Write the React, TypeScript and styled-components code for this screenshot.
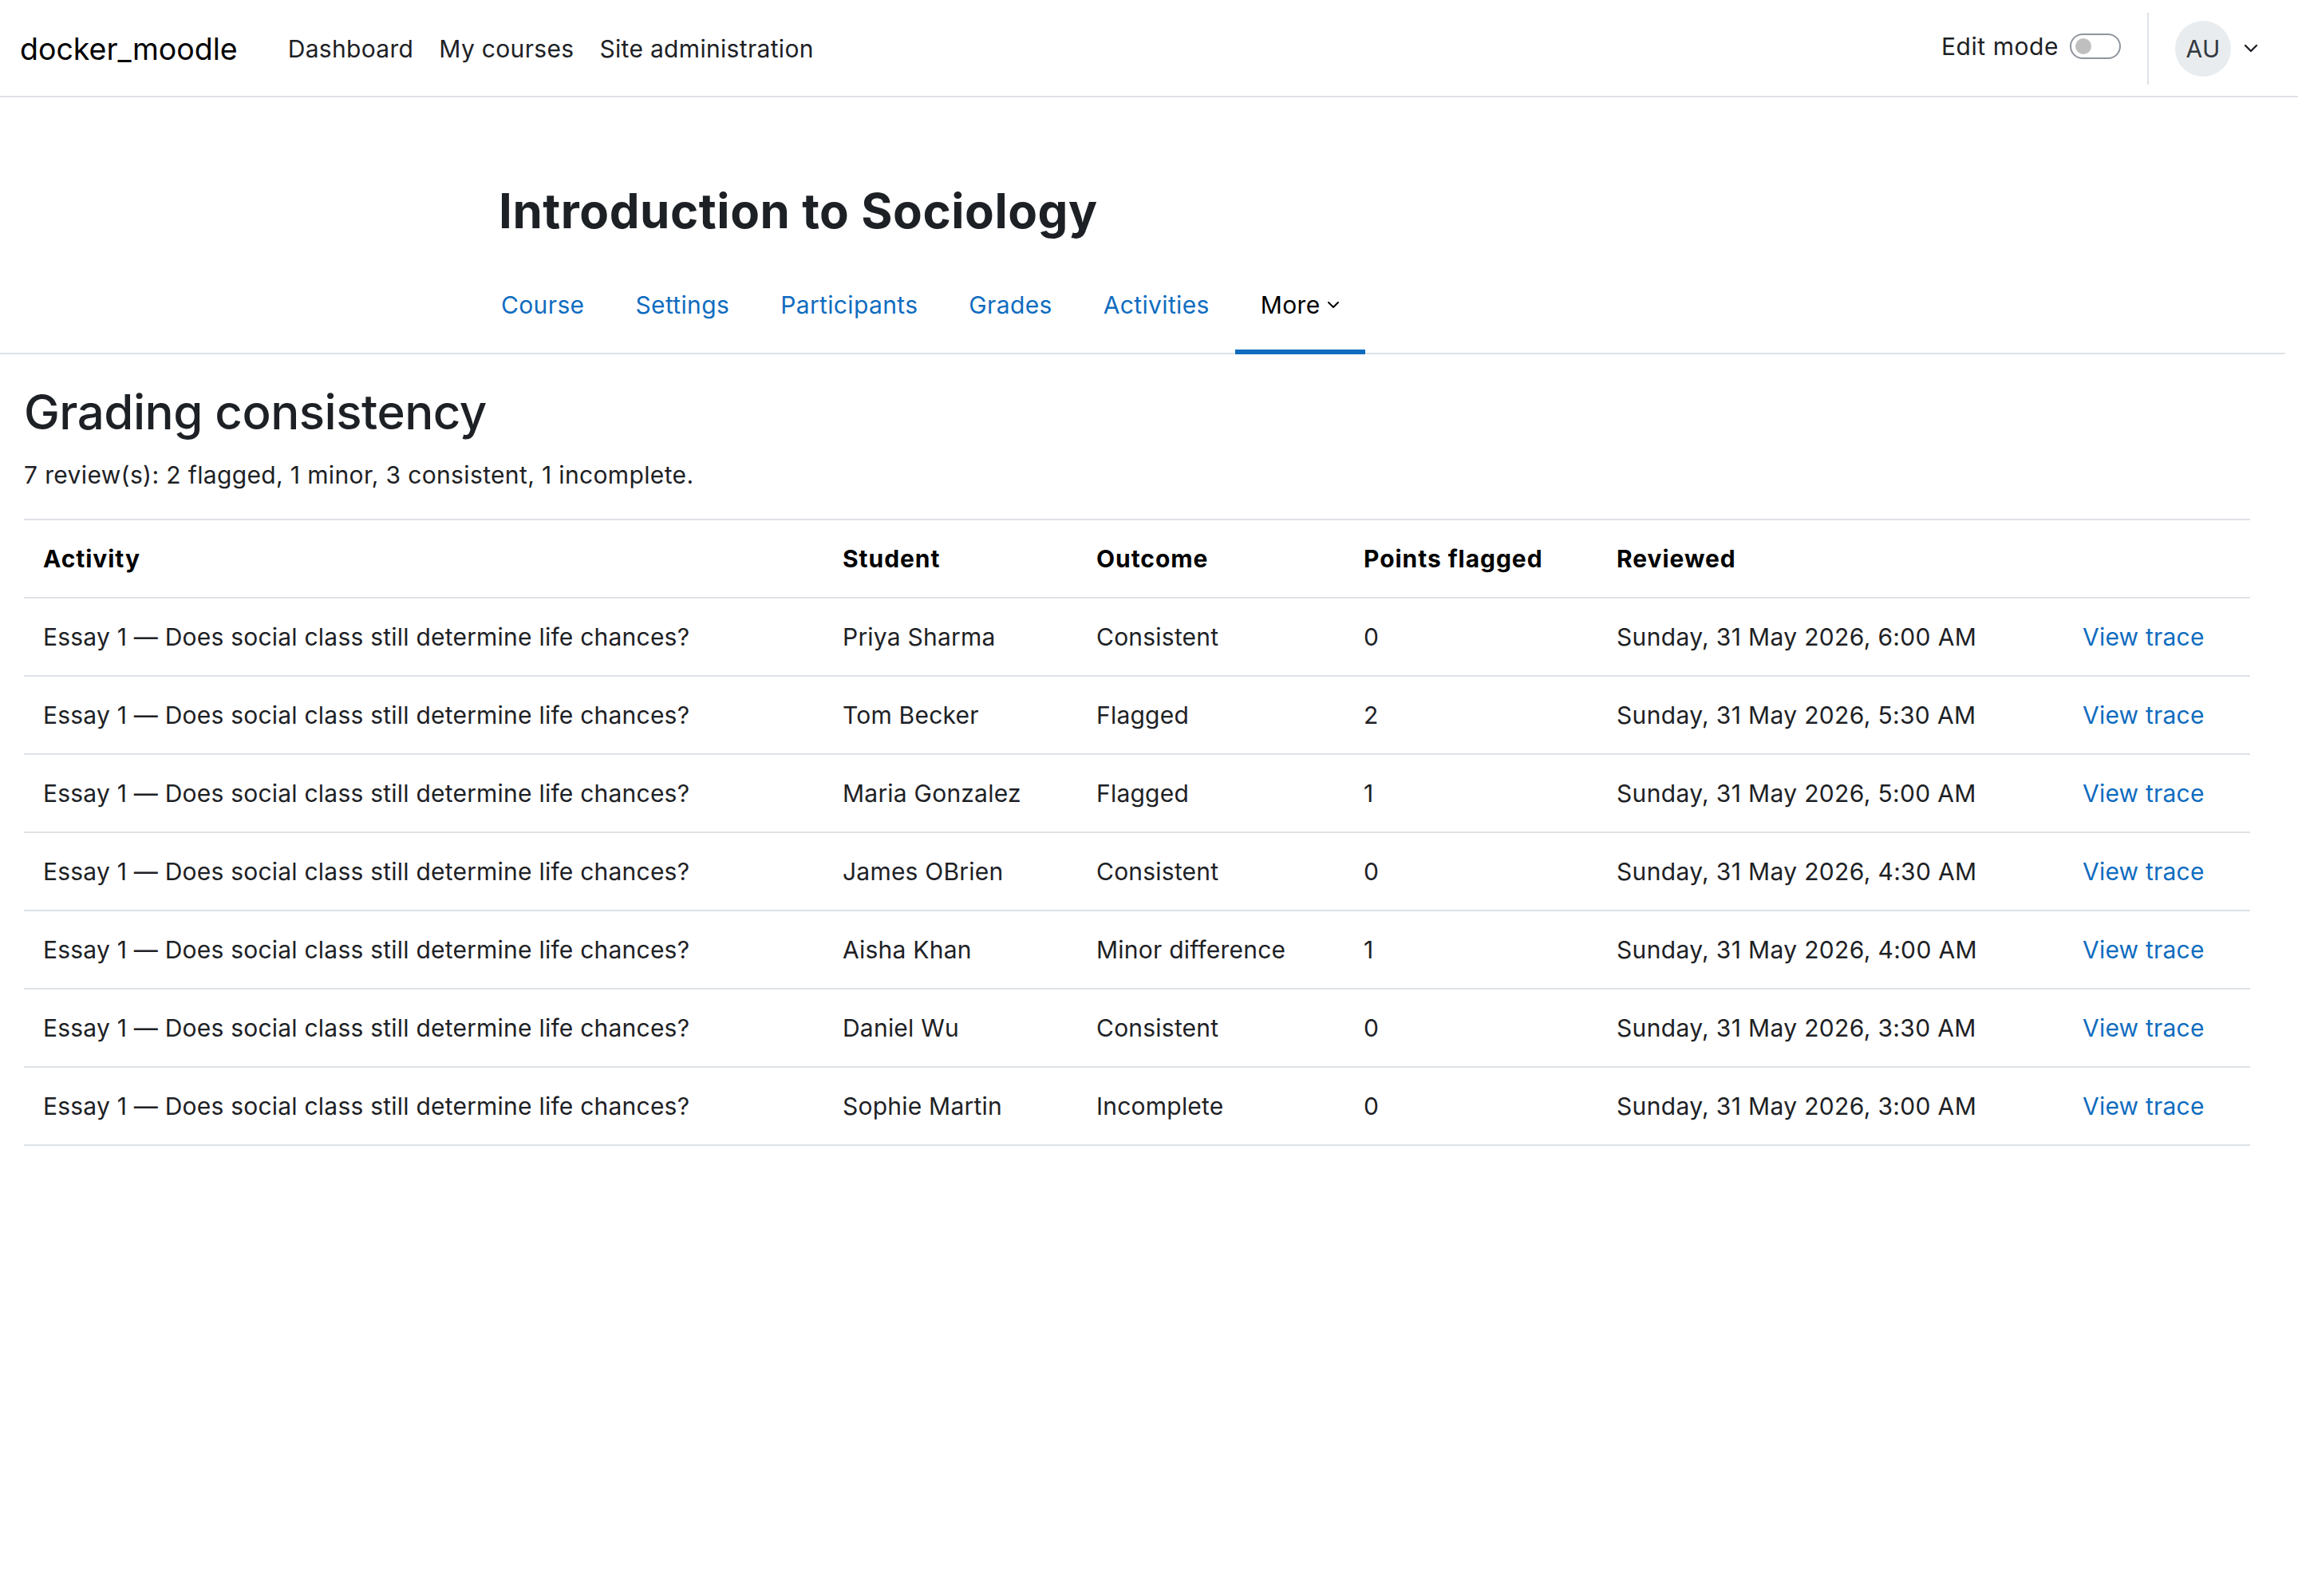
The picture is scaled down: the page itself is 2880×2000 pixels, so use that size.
import React from "react";
import styled, { createGlobalStyle } from "styled-components";

const Global = createGlobalStyle`
  html, body { margin: 0; padding: 0; background: #fff; }
  body { font-family: Inter, "Liberation Sans", sans-serif; color: #1d2125; font-size: 30px; line-height: 45px; letter-spacing: 0.22px; }
  a { text-decoration: none; color: inherit; }
`;

const Navbar = styled.header`
  display: flex; align-items: center; box-sizing: border-box; height: 122px; border-bottom: 2px solid #dee2e6; padding: 2px 50px 0 25px;
`;
const Brand = styled.a`
  font-size: 37.5px; letter-spacing: 0; color: #000; margin-right: 63px;
`;
const PrimaryNav = styled.nav`
  display: flex; gap: 32px; flex: 1;
`;
const NavItem = styled.a`
  color: #1d2125; letter-spacing: 0.32px;
`;
const UserArea = styled.div`
  display: flex; align-items: center;
`;
const EditMode = styled.div`
  display: flex; align-items: center; gap: 14px; padding-bottom: 6px; letter-spacing: 0.55px;
`;
const Toggle = styled.span`
  display: flex; align-items: center; box-sizing: border-box; width: 64px; height: 32px; border: 2px solid #8f959e; border-radius: 16px; padding-left: 5px;
`;
const Knob = styled.span`
  display: block; width: 20px; height: 20px; border-radius: 50%; background: #bfbfbf;
`;
const Divider = styled.span`
  display: block; width: 2px; height: 90px; background: #dee2e6; margin: 0 33px;
`;
const Avatar = styled.span`
  display: flex; align-items: center; justify-content: center; width: 70px; height: 70px; border-radius: 50%; background: #e9ecef; color: #343a40; margin-right: 16px;
`;
const Chevron = styled.svg`
  display: block; fill: none; stroke: currentColor; stroke-linecap: round; stroke-linejoin: round;
`;
const CourseHeader = styled.div`
  padding: 106px 16px 0 0;
`;
const CourseTitle = styled.h1`
  margin: 0 0 43px 625px; font-size: 60px; line-height: 72px; font-weight: 700; letter-spacing: 0.55px; color: #1d2125;
`;
const Tabs = styled.nav`
  display: flex; padding-left: 596px; border-bottom: 2px solid #dee2e6; height: 99px;
`;
const Tab = styled.a<{ $active?: boolean }>`
  display: flex; align-items: center; gap: 8px; box-sizing: border-box; height: 101px; padding: 0 32px 17px; letter-spacing: 0.36px; color: ${p => (p.$active ? "#000" : "#0f6cbf")};
  border-bottom: 6px solid ${p => (p.$active ? "#0f6cbf" : "transparent")};
`;
const Main = styled.main`
  padding: 36px 60px 0 30px;
`;
const PageTitle = styled.h2`
  margin: 0; font-size: 60px; line-height: 72px; font-weight: 500; letter-spacing: -0.5px; color: #1d2125;
`;
const Summary = styled.p`
  margin: 21px 0 32px; letter-spacing: 0.36px;
`;
const Table = styled.table`
  width: 100%; border-collapse: collapse; border-top: 2px solid #dee2e6;
`;
const Row = styled.tr`
  border-bottom: 2px solid #dee2e6;
`;
const Th = styled.th<{ $w?: number }>`
  width: ${p => (p.$w ? `${p.$w}px` : "auto")}; height: 96px; box-sizing: content-box; padding: 0 24px; text-align: left; font-weight: 700; letter-spacing: 0.95px; color: #000;
`;
const Td = styled.td`
  height: 96px; padding: 0 24px;
`;
const DateCell = styled(Td)`
  letter-spacing: 0.34px;
`;
const TraceLink = styled.a`
  color: #0f6cbf;
`;

const rows = [
  ["Priya Sharma", "Consistent", "0", "6:00"],
  ["Tom Becker", "Flagged", "2", "5:30"],
  ["Maria Gonzalez", "Flagged", "1", "5:00"],
  ["James OBrien", "Consistent", "0", "4:30"],
  ["Aisha Khan", "Minor difference", "1", "4:00"],
  ["Daniel Wu", "Consistent", "0", "3:30"],
  ["Sophie Martin", "Incomplete", "0", "3:00"],
];

export default function App() {
  return (
    <>
      <Global />
      <Navbar>
        <Brand href="#">docker_moodle</Brand>
        <PrimaryNav>
          <NavItem href="#">Dashboard</NavItem>
          <NavItem href="#">My courses</NavItem>
          <NavItem href="#">Site administration</NavItem>
        </PrimaryNav>
        <UserArea>
          <EditMode>
            <span>Edit mode</span>
            <Toggle><Knob /></Toggle>
          </EditMode>
          <Divider />
          <Avatar>AU</Avatar>
          <Chevron width="18" height="12" viewBox="0 0 18 12" strokeWidth="2.4"><path d="M2 2l7 7 7-7" /></Chevron>
        </UserArea>
      </Navbar>
      <CourseHeader>
        <CourseTitle>Introduction to Sociology</CourseTitle>
        <Tabs>
          <Tab href="#">Course</Tab>
          <Tab href="#">Settings</Tab>
          <Tab href="#">Participants</Tab>
          <Tab href="#">Grades</Tab>
          <Tab href="#">Activities</Tab>
          <Tab href="#" $active>
            More
            <Chevron width="16" height="10" viewBox="0 0 16 10" strokeWidth="2"><path d="M2 2l6 6 6-6" /></Chevron>
          </Tab>
        </Tabs>
      </CourseHeader>
      <Main>
        <PageTitle>Grading consistency</PageTitle>
        <Summary>7 review(s): 2 flagged, 1 minor, 3 consistent, 1 incomplete.</Summary>
        <Table>
          <thead>
            <Row>
              <Th $w={954}>Activity</Th>
              <Th $w={270}>Student</Th>
              <Th $w={287}>Outcome</Th>
              <Th $w={269}>Points flagged</Th>
              <Th $w={536}>Reviewed</Th>
              <Th />
            </Row>
          </thead>
          <tbody>
            {rows.map(r => (
              <Row key={r[0]}>
                <Td>Essay 1 — Does social class still determine life chances?</Td>
                <Td>{r[0]}</Td>
                <Td>{r[1]}</Td>
                <Td>{r[2]}</Td>
                <DateCell>Sunday, 31 May 2026, {r[3]} AM</DateCell>
                <Td><TraceLink href="#">View trace</TraceLink></Td>
              </Row>
            ))}
          </tbody>
        </Table>
      </Main>
    </>
  );
}
